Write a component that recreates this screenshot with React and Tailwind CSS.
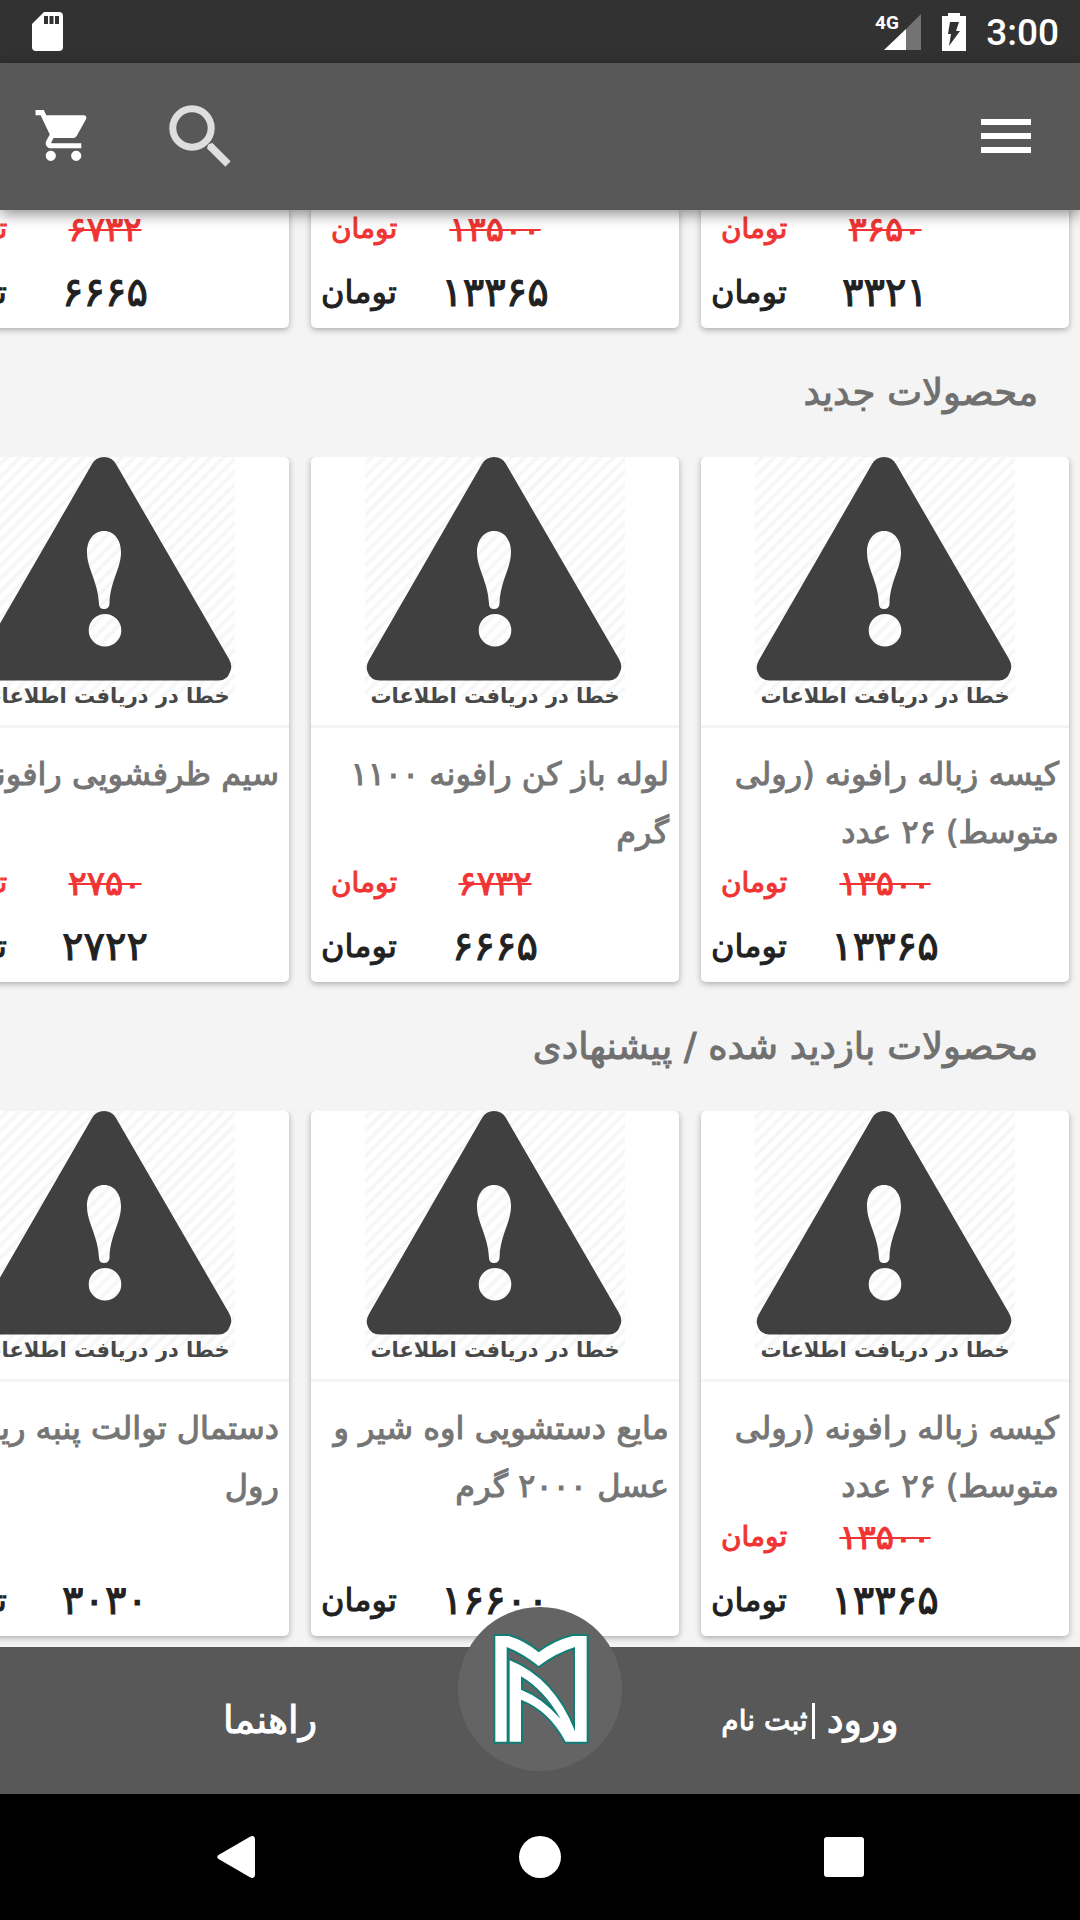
import React from "react";
import { MdShoppingCart } from "react-icons/md";

const failedImage = "خطا در دریافت اطلاعات";

const sections = [
  {
    title: null,
    products: [
      { old: "۳۶۵۰", price: "۳۳۲۱" },
      { old: "۱۳۵۰۰", price: "۱۳۳۶۵" },
      { old: "۶۷۳۲", price: "۶۶۶۵" },
    ],
  },
  {
    title: "محصولات جدید",
    products: [
      { name: ["کیسه زباله رافونه (رولی", "متوسط) ۲۶ عدد"], old: "۱۳۵۰۰", price: "۱۳۳۶۵" },
      { name: ["لوله باز کن رافونه ۱۱۰۰", "گرم"], old: "۶۷۳۲", price: "۶۶۶۵" },
      { name: ["سیم ظرفشویی رافونه"], old: "۲۷۵۰", price: "۲۷۲۲" },
    ],
  },
  {
    title: "محصولات بازدید شده / پیشنهادی",
    products: [
      { name: ["کیسه زباله رافونه (رولی", "متوسط) ۲۶ عدد"], old: "۱۳۵۰۰", price: "۱۳۳۶۵" },
      { name: ["مایع دستشویی اوه شیر و", "عسل ۲۰۰۰ گرم"], price: "۱۶۶۰۰" },
      { name: ["دستمال توالت پنبه ریز", "رول"], price: "۳۰۳۰" },
    ],
  },
];

function StatusBar() {
  return (
    <div className="flex h-[63px] items-center justify-between bg-[#323232] pl-8 pr-[21px] text-white">
      <svg width="31" height="39" viewBox="0 0 31 39" aria-hidden="true">
        <path fill="#fff" d="M12 0h15a4 4 0 0 1 4 4v31a4 4 0 0 1-4 4H4a4 4 0 0 1-4-4V12z" />
        <path fill="#323232" d="M12 4h4v8h-4zM17.500 4h4v8h-4zM23 4h4v8h-4z" />
      </svg>
      <div className="flex items-center">
        <svg width="46" height="38" viewBox="0 0 46 38" role="img" aria-label="4G">
          <path fill="#737373" d="M46 1v36H31V16z" />
          <path fill="#fff" d="M31 16v21H9z" />
          <text x="0" y="16" fill="#fff" className="font-[Roboto,sans-serif] text-[19px] font-bold">4G</text>
        </svg>
        <svg className="ml-[21px]" width="24" height="38" viewBox="0 0 24 38" aria-hidden="true">
          <path fill="#fff" d="M6 0h12v3h6v35H0V3h6z" />
          <path fill="#323232" d="M8 9h9l-3 9h4L7 33l2-12H6z" />
        </svg>
        <span className="ml-5 pt-[2px] font-[Roboto,sans-serif] text-[37px] font-medium leading-none">3:00</span>
      </div>
    </div>
  );
}

function Toolbar() {
  return (
    <header className="relative z-10 flex h-[147px] items-center justify-between bg-[#585858] pb-[2px] pl-[33px] pr-[49px] shadow-[0_4px_14px_rgba(0,0,0,0.45)]">
      <div className="flex items-center gap-[75px]">
        <button type="button" aria-label="سبد خرید" className="text-white">
          <MdShoppingCart size={61} />
        </button>
        <button type="button" aria-label="جستجو">
          <svg width="62" height="62" viewBox="0 0 62 62" fill="none" stroke="#dedede">
            <circle cx="23" cy="23" r="19.200" strokeWidth="7" />
            <path d="M40.500 40.500 59 59" strokeWidth="7.500" />
            <circle cx="42" cy="42" r="1.500" strokeWidth="4" />
          </svg>
        </button>
      </div>
      <button type="button" aria-label="منو" className="flex flex-col gap-2">
        <span className="block h-[6px] w-[50px] bg-white" />
        <span className="block h-[6px] w-[50px] bg-white" />
        <span className="block h-[6px] w-[50px] bg-white" />
      </button>
    </header>
  );
}

function Placeholder() {
  return (
    <div className="h-[271px] border-b-[3px] border-[#f4f4f4]">
      <figure className="mx-auto h-[240px] w-[260px] bg-[repeating-linear-gradient(135deg,#ffffff_0px,#ffffff_2px,#f4f4f4_5px,#ffffff_8px,#ffffff_9px)]">
        <svg className="block" width="260" height="225" viewBox="2 0 260 225" aria-hidden="true">
          <path
            fill="#404040"
            fillRule="evenodd"
            d="M119 7Q123 0 131 0T143 7L256 202Q260 209 257 215Q254 223.500 246 223.500H17Q8 223.500 5 216Q2 210 6 203ZM131 74C120 74 114 84 114 95C114 112 125 124 126 147Q126 152 131 152T136.500 147C137 124 148 112 148 95C148 84 142 74 131 74ZM132 157A16.300 16.300 0 1 0 132 189.600A16.300 16.300 0 1 0 132 157Z"
          />
        </svg>
        <figcaption className="whitespace-nowrap text-center text-[21px] font-bold leading-[28px] text-[#484848]">{failedImage}</figcaption>
      </figure>
    </div>
  );
}

function PriceRow({ value, old }) {
  if (old) {
    return (
      <div className="grid h-11 grid-cols-[1fr_auto_1fr] items-center text-[#f03434] [-webkit-text-stroke:1px_#f03434]">
        <span />
        <del className="text-[34px] leading-none decoration-2">{value}</del>
        <span className="pl-5 text-left text-[28px] leading-none">تومان</span>
      </div>
    );
  }
  return (
    <div className="grid h-[77px] grid-cols-[1fr_auto_1fr] items-center pt-1 text-[#212121] [-webkit-text-stroke:1px_#212121]">
      <span />
      <span className="text-[40px] leading-none">{value}</span>
      <span className="pl-[10px] text-left text-[32px] leading-none">تومان</span>
    </div>
  );
}

function Card({ product }) {
  return (
    <article className="w-[368px] shrink-0 overflow-hidden rounded-[5px] bg-white shadow-[0_2px_6px_rgba(0,0,0,0.3)]">
      {product.name && (
        <>
          <Placeholder />
          <h3 className="h-[133px] px-[10px] pt-[17px] text-[32px] leading-[58px] text-[#757575] [-webkit-text-stroke:1px_#757575]">
            {product.name.map((line) => (
              <span key={line} className="block whitespace-nowrap">{line}</span>
            ))}
          </h3>
        </>
      )}
      {product.old ? <PriceRow old value={product.old} /> : <div className="h-11" />}
      <PriceRow value={product.price} />
    </article>
  );
}

function Logo() {
  return (
    <svg width="164" height="164" viewBox="52 52 492 492" role="img" aria-label="MR">
      <circle cx="298" cy="298" r="246" fill="#646464" />
      <path
        fill="#fff"
        fillRule="evenodd"
        stroke="#107d77"
        strokeWidth="12"
        strokeLinejoin="round"
        paintOrder="stroke"
        d="M164 139H204Q252 153 294 188Q340 153 396 139H438V456H375Q325 362 241 330V456H207V212Q340 265 403 425V172Q345 190 294 229Q245 190 198 172V456H164ZM241 260Q310 300 360 388Q305 325 241 300Z"
      />
    </svg>
  );
}

export default function App() {
  return (
    <div className="flex min-h-screen flex-col overflow-hidden bg-[#f4f4f4] font-['DejaVu_Sans',sans-serif]">
      <StatusBar />
      <Toolbar />
      <main dir="rtl" className="-mt-[3px] flex flex-1 flex-col">
        {sections.map((section, i) => (
          <section key={i}>
            {section.title && (
              <h2 className="flex h-[118px] items-center pb-3 pr-[42px] text-[37px] leading-none text-[#707070] [-webkit-text-stroke:1px_#707070]">{section.title}</h2>
            )}
            <div className="flex gap-[22px] overflow-hidden px-[11px] pb-[11px]">
              {section.products.map((p, j) => (
                <Card key={j} product={p} />
              ))}
            </div>
          </section>
        ))}
      </main>
      <footer dir="rtl" className="relative z-10 grid h-[147px] grid-cols-2 items-center bg-[#585858] text-white [-webkit-text-stroke:1px_#ffffff]">
        <a href="#login" className="flex items-center justify-center">
          <span className="text-[38px]">ورود</span>
          <span className="ml-1 mr-3 h-9 w-[3px] bg-white" />
          <span className="text-[28px]">ثبت نام</span>
        </a>
        <a href="#help" className="text-center text-[38px]">راهنما</a>
        <a href="#home" aria-label="خانه" className="absolute -top-10 left-1/2 -translate-x-1/2">
          <Logo />
        </a>
      </footer>
      <nav className="flex h-[126px] items-center justify-center bg-black">
        <button type="button" aria-label="بازگشت" className="flex w-[304px] justify-center">
          <svg width="38" height="42" viewBox="0 0 38 42" fill="#fff"><path d="M33 .7Q37.500-1.500 38 3V39Q37.500 43.500 33 41.300L1.500 23Q-1 21 1.500 19Z" /></svg>
        </button>
        <button type="button" aria-label="صفحه اصلی" className="flex w-[304px] justify-center">
          <span className="size-[42px] rounded-full bg-white" />
        </button>
        <button type="button" aria-label="برنامه‌های اخیر" className="flex w-[304px] justify-center">
          <span className="size-10 rounded-[3px] bg-white" />
        </button>
      </nav>
    </div>
  );
}
